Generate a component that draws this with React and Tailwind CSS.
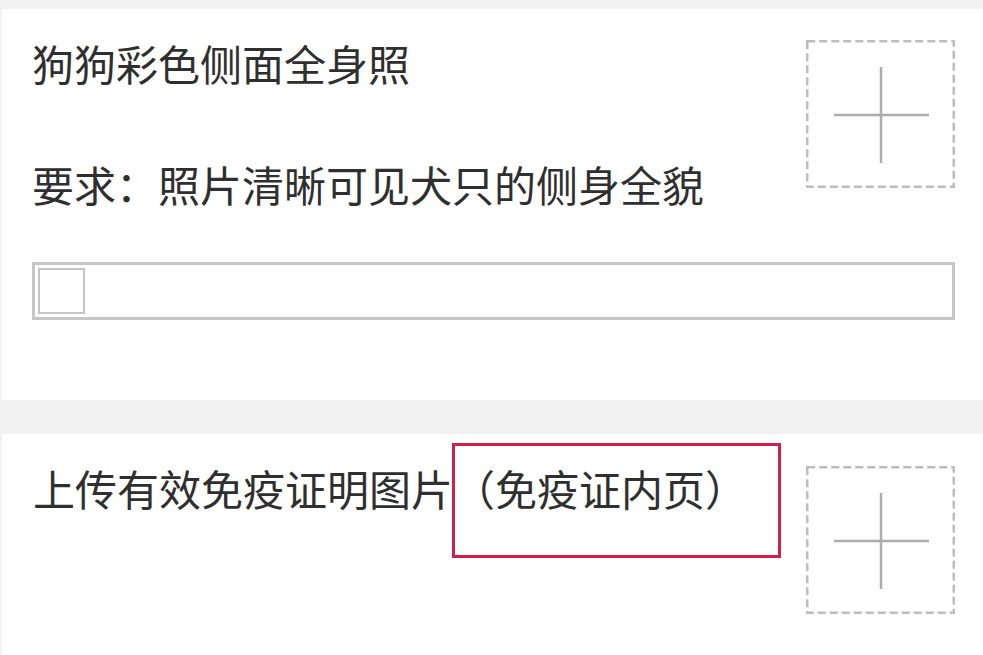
import React from 'react'

const font = { fontFamily: '"Noto Sans CJK SC", "Noto Sans", sans-serif' }

function UploadBox() {
  return (
    <div className="w-[149px] h-[148px] shrink-0">
      <svg width="149" height="148" viewBox="0 0 149 148">
        <rect x="1.25" y="1.25" width="146.5" height="145.5" fill="none" stroke="#bdbdbd" strokeWidth="2.5" strokeDasharray="8 4" />
        <line x1="28" y1="75" x2="123" y2="75" stroke="#acacac" strokeWidth="2.5" />
        <line x1="75" y1="27" x2="75" y2="123" stroke="#acacac" strokeWidth="2.5" />
      </svg>
    </div>
  )
}

export default function App() {
  return (
    <div className="w-[983px] h-[655px] overflow-hidden bg-[#f1f1f1] pt-[9px] text-[#2f2f2f]" style={font}>
      <div className="ml-[2px] bg-white pt-[31px] pl-[30px] pr-[28px] pb-[80px]">
        <div className="flex items-start justify-between">
          <div className="flex flex-col pt-[2px]">
            <div className="text-[42px] leading-[42px]">狗狗彩色侧面全身照</div>
            <div className="text-[42px] leading-[42px] mt-[79px]">要求：照片清晰可见犬只的侧身全貌</div>
          </div>
          <UploadBox />
        </div>
        <div className="mt-[57px] h-[58px] border-[3px] border-[#c6c6c6] p-[3px]">
          <div className="w-[47px] h-[46px] border-2 border-[#c4c4c4]" />
        </div>
      </div>

      <div className="mt-[34px] ml-[2px] bg-white relative pt-[32px] pl-[31px] pr-[28px] h-[240px]">
        <div className="flex items-start justify-between">
          <div className="text-[42px] leading-[42px] pt-[1px]">上传有效免疫证明图片（免疫证内页）</div>
          <UploadBox />
        </div>
        <div className="absolute left-[450px] top-[9px] w-[329px] h-[115px] border-[3px] border-[#cf1f4a]" />
      </div>
    </div>
  )
}
